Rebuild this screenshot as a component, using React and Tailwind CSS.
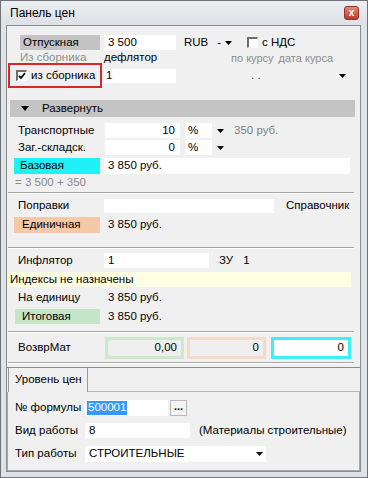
const Arrow = ({ className = "" }) => (
  <svg width="7" height="4" viewBox="0 0 7 4" className={className}>
    <path d="M0 0h7L3.5 4z" fill="#000" />
  </svg>
);

const CheckBox = ({ checked }) => (
  <div className="w-[11px] h-[11px] shrink-0 border-t-2 border-l-2 border-[#6e6e6e] border-b border-r border-b-white border-r-white bg-white flex items-center justify-center">
    {checked && (
      <svg width="8" height="8" viewBox="0 0 8 8">
        <path d="M1 4l2 2 4-5" stroke="#000" strokeWidth="1.8" fill="none" />
      </svg>
    )}
  </div>
);

const Sep = ({ mt }) => (
  <div className={`${mt} ml-[1px] w-[346px] h-[2px] border-t border-[#a6a6a6] border-b border-b-white`} />
);

export default function App() {
  return (
    <div className="w-[368px] h-[478px] bg-[#dfe2e6] border border-[#6f7378] flex flex-col text-[11.5px] leading-none text-black font-['Liberation_Sans',Arial,sans-serif]">
      {/* title bar */}
      <div className="h-[24px] shrink-0 flex items-center pl-[9px] pr-[8px] bg-gradient-to-b from-[#eceef1] to-[#dde1e5]">
        <span className="text-[12px]">Панель цен</span>
        <div className="ml-auto w-[15px] h-[14px] rounded-[3px] border border-[#8a3327] bg-gradient-to-b from-[#e6857a] to-[#c0392b] flex items-center justify-center text-white text-[10px] font-bold">
          x
        </div>
      </div>

      <div className="flex-1 ml-[5px] mr-[6px] mb-[5px] border border-[#8c8c8c] bg-[#f0f0f0] flex flex-col">
        {/* upper panel */}
        <div className="h-[342px] shrink-0 border-b border-[#8a8a8a] flex flex-col">
          {/* Отпускная */}
          <div className="mt-[9px] h-[15px] flex items-center">
            <div className="ml-[13px] w-[80px] h-full bg-[#c3c3c3] pl-[3px] flex items-center">Отпускная</div>
            <div className="ml-[4px] w-[72px] h-full bg-white pl-[4px] flex items-center">3 500</div>
            <div className="ml-[6px] w-[51px] h-full flex items-center pl-[2px]">
              <span>RUB</span>
              <span className="ml-auto">-</span>
              <Arrow className="ml-[4px] mr-[1px]" />
            </div>
            <div className="ml-[14px]">
              <CheckBox />
            </div>
            <span className="ml-[4px]">с НДС</span>
          </div>

          {/* Из сборника */}
          <div className="mt-[2px] h-[12px] flex items-center">
            <span className="ml-[13px] w-[84px] text-[#8d8d8d]">Из сборника</span>
            <span className="w-[127px]">дефлятор</span>
            <span className="text-[11px] text-[#8d8d8d]">по курсу</span>
            <span className="ml-[5px] text-[11px] text-[#8d8d8d]">дата курса</span>
          </div>

          {/* из сборника checkbox */}
          <div className="-mt-[1px] h-[25px] flex items-center">
            <div className="ml-[1px] w-[94px] h-full border-2 border-[#d8262b] flex items-center pl-[6px]">
              <CheckBox checked />
              <span className="ml-[4px]">из сборника</span>
            </div>
            <div className="ml-[2px] w-[72px] h-[14px] bg-white pl-[2px] flex items-center">1</div>
            <div className="ml-[60px] w-[116px] h-[15px] flex items-center">
              <span className="pl-[15px] text-[#444]">. .</span>
              <Arrow className="ml-auto mr-[6px]" />
            </div>
          </div>

          {/* Развернуть */}
          <div className="mt-[12px] ml-[3px] w-[345px] h-[17px] bg-[#c4c4c4] flex items-center pl-[11px]">
            <svg width="8" height="5" viewBox="0 0 8 5">
              <path d="M0 0h8L4 5z" fill="#000" />
            </svg>
            <span className="ml-[13px]">Развернуть</span>
          </div>

          {/* Транспортные */}
          <div className="mt-[6px] h-[15px] flex items-center">
            <span className="ml-[11px] w-[87px]">Транспортные</span>
            <div className="w-[75px] h-full bg-white pr-[5px] flex items-center justify-end">10</div>
            <div className="ml-[5px] w-[27px] h-full bg-white pl-[3px] flex items-center">%</div>
            <Arrow className="ml-[5px]" />
            <span className="ml-[10px] text-[#808080]">350 руб.</span>
          </div>

          {/* Заг.-складск. */}
          <div className="mt-[2px] h-[15px] flex items-center">
            <span className="ml-[11px] w-[87px]">Заг.-складск.</span>
            <div className="w-[75px] h-full bg-white pr-[5px] flex items-center justify-end">0</div>
            <div className="ml-[5px] w-[27px] h-full bg-white pl-[3px] flex items-center">%</div>
            <Arrow className="ml-[5px]" />
          </div>

          {/* Базовая */}
          <div className="mt-[3px] h-[16px] flex items-center">
            <div className="ml-[7px] w-[86px] h-full bg-[#1ff2f6] pl-[6px] flex items-center">Базовая</div>
            <div className="ml-[4px] w-[246px] h-full bg-white pl-[4px] flex items-center">3 850 руб.</div>
          </div>

          <div className="mt-[3px] h-[12px] flex items-center ml-[8px] text-[#8a8a8a]">= 3 500 + 350</div>

          <Sep mt="mt-[3px]" />

          {/* Поправки */}
          <div className="mt-[5px] h-[14px] flex items-center">
            <span className="ml-[11px] w-[86px]">Поправки</span>
            <div className="w-[170px] h-full bg-white" />
            <span className="ml-[12px]">Справочник</span>
          </div>

          {/* Единичная */}
          <div className="mt-[4px] h-[16px] flex items-center">
            <div className="ml-[7px] w-[86px] h-full bg-[#f5c8a8] pl-[8px] flex items-center">Единичная</div>
            <span className="ml-[8px]">3 850 руб.</span>
          </div>

          <Sep mt="mt-[14px]" />

          {/* Инфлятор */}
          <div className="mt-[4px] h-[15px] flex items-center">
            <span className="ml-[11px] w-[86px]">Инфлятор</span>
            <div className="w-[105px] h-full bg-white pl-[4px] flex items-center">1</div>
            <span className="ml-[10px]">ЗУ</span>
            <span className="ml-[10px]">1</span>
          </div>

          <div className="mt-[4px] ml-[1px] w-[343px] h-[15px] bg-[#fefee3] pl-[2px] flex items-center">
            Индексы не назначены
          </div>

          {/* На единицу */}
          <div className="mt-[4px] h-[14px] flex items-center">
            <span className="ml-[11px] w-[90px]">На единицу</span>
            <span>3 850 руб.</span>
          </div>

          {/* Итоговая */}
          <div className="mt-[4px] h-[15px] flex items-center">
            <div className="ml-[8px] w-[85px] h-full bg-[#c4e5c6] pl-[7px] flex items-center">Итоговая</div>
            <span className="ml-[8px]">3 850 руб.</span>
          </div>

          <Sep mt="mt-[7px]" />

          {/* ВозврМат */}
          <div className="mt-[4px] h-[22px] flex items-center">
            <span className="ml-[11px] w-[87px]">ВозврМат</span>
            <div className="w-[79px] h-full border-[3px] border-[#cbe8cd] bg-[#eeeeee] pr-[4px] flex items-center justify-end">0,00</div>
            <div className="ml-[3px] w-[79px] h-full border-[3px] border-[#f6dac6] bg-[#eeeeee] pr-[4px] flex items-center justify-end">0</div>
            <div className="ml-[5px] w-[80px] h-full border-[3px] border-[#3df0f5] bg-white pr-[4px] flex items-center justify-end">0</div>
          </div>

          <Sep mt="mt-[3px]" />
        </div>

        {/* tab strip */}
        <div className="h-[24px] shrink-0 flex">
          <div className="ml-[1px] w-[80px] h-full border-l border-r border-[#9a9a9a] pl-[6px] flex items-center">
            Уровень цен
          </div>
          <div className="flex-1 border-b border-[#b4b4b4]" />
        </div>

        {/* tab content */}
        <div className="flex-1 border-l border-r border-b border-[#a8a8a8] flex flex-col">
          <div className="mt-[8px] h-[16px] flex items-center">
            <span className="ml-[7px] w-[70px]">№ формулы</span>
            <div className="w-[83px] h-full bg-white pl-[2px] flex items-center">
              <span className="bg-[#3399ff] text-white px-[1px] py-[1px]">500001</span>
            </div>
            <div className="ml-[2px] w-[17px] h-full border border-[#b8b8b8] bg-[#f4f4f4] flex items-center justify-center text-[11px] font-bold pb-[3px]">
              ...
            </div>
          </div>

          <div className="mt-[7px] h-[15px] flex items-center">
            <span className="ml-[7px] w-[70px]">Вид работы</span>
            <div className="w-[105px] h-full bg-white pl-[4px] flex items-center">8</div>
            <span className="ml-[9px]">(Материалы строительные)</span>
          </div>

          <div className="mt-[8px] h-[16px] flex items-center">
            <span className="ml-[7px] w-[70px]">Тип работы</span>
            <div className="w-[181px] h-full bg-white pl-[4px] flex items-center">
              <span>СТРОИТЕЛЬНЫЕ</span>
              <Arrow className="ml-auto mr-[3px]" />
            </div>
          </div>
        </div>
      </div>
    </div>
  );
}
